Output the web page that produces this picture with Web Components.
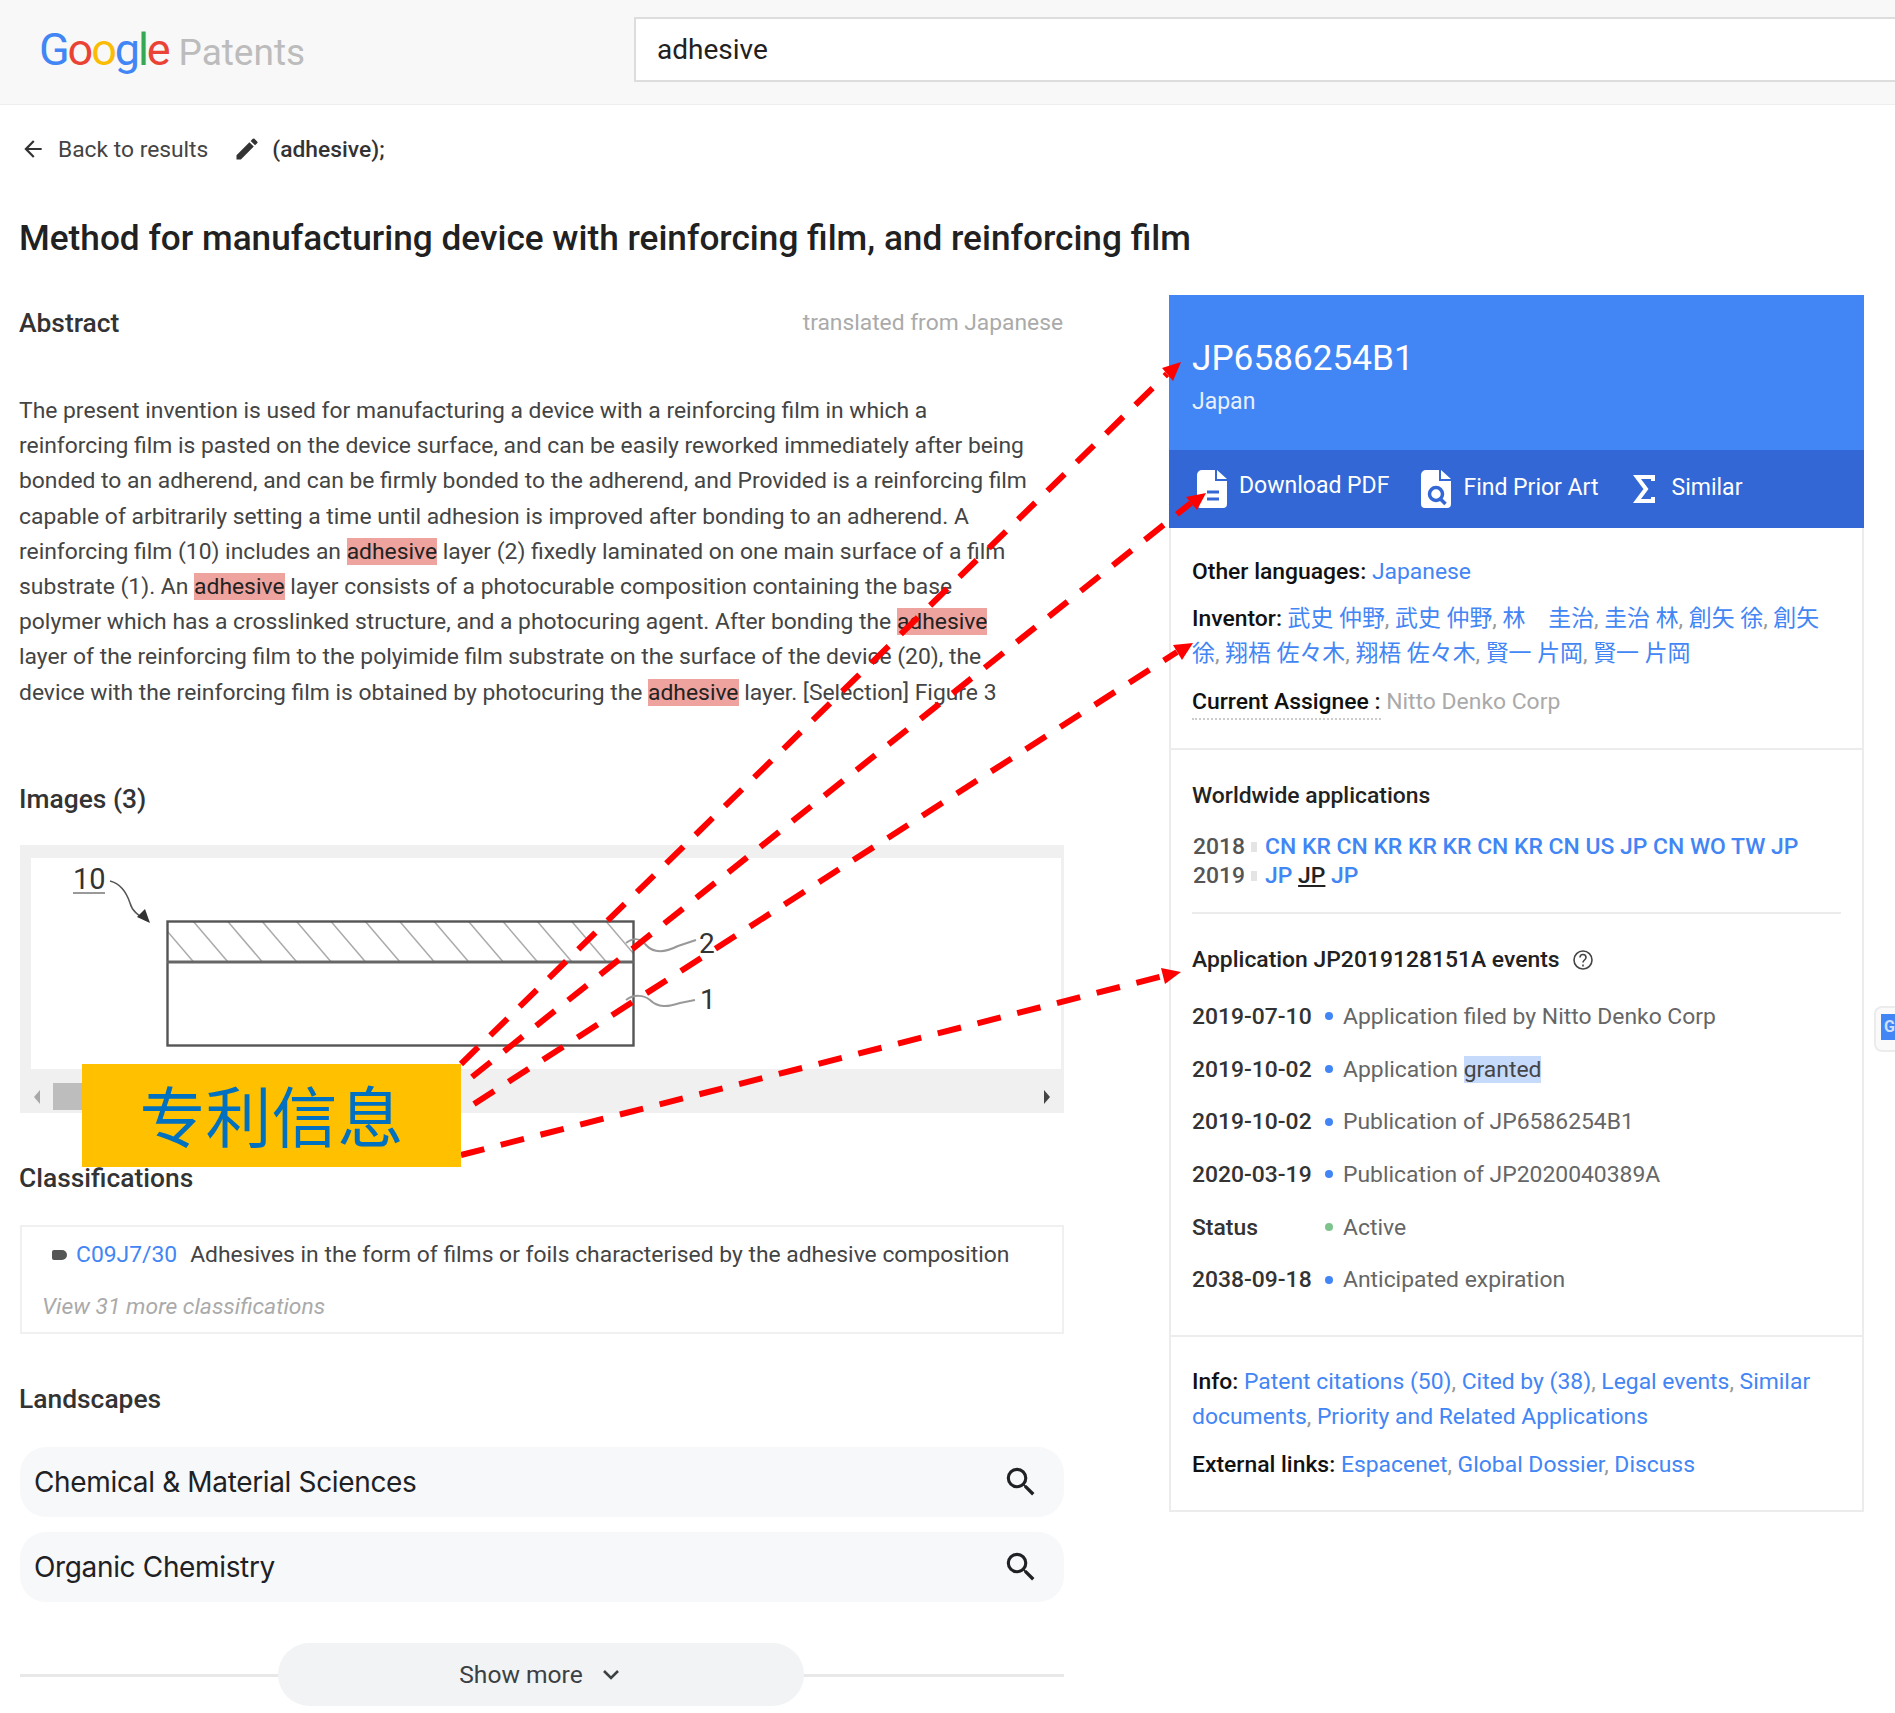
<!DOCTYPE html>
<html>
<head>
<meta charset="utf-8">
<title>Google Patents</title>
<style>
    html, body { margin: 0; padding: 0; background: white; }
    body {
        position: relative;
        width: 1895px;
        height: 1713px;
        overflow: hidden;
        font-family: Roboto, "Noto Sans CJK JP", sans-serif;
        font-size: 23px;
        color: #212121;
    }
</style>
</head>
<body>
<gp-header query="adhesive"></gp-header>
<gp-crumbs query="(adhesive);"></gp-crumbs>
<gp-title>Method for manufacturing device with reinforcing film, and reinforcing film</gp-title>
<gp-main>
    <gp-abstract slot="left" note="translated from Japanese">The present invention is used for manufacturing a device with a reinforcing film in which a<br>reinforcing film is pasted on the device surface, and can be easily reworked immediately after being<br>bonded to an adherend, and can be firmly bonded to the adherend, and Provided is a reinforcing film<br>capable of arbitrarily setting a time until adhesion is improved after bonding to an adherend. A<br>reinforcing film (10) includes an <mark>adhesive</mark> layer (2) fixedly laminated on one main surface of a film<br>substrate (1). An <mark>adhesive</mark> layer consists of a photocurable composition containing the base<br>polymer which has a crosslinked structure, and a photocuring agent. After bonding the <mark>adhesive</mark><br>layer of the reinforcing film to the polyimide film substrate on the surface of the device (20), the<br>device with the reinforcing film is obtained by photocuring the <mark>adhesive</mark> layer. [Selection] Figure 3</gp-abstract>
    <gp-figure slot="left"></gp-figure>
    <gp-classes slot="left" code="C09J7/30" more="View 31 more classifications">Adhesives in the form of films or foils characterised by the adhesive composition</gp-classes>
    <gp-landscapes slot="left">
        <gp-pill>Chemical &amp; Material Sciences</gp-pill>
        <gp-pill>Organic Chemistry</gp-pill>
    </gp-landscapes>
    <gp-show-more slot="left"></gp-show-more>
    <gp-card slot="right"></gp-card>
</gp-main>
<gp-side-tab></gp-side-tab>
<gp-overlay></gp-overlay>

<script>
class GpHeader extends HTMLElement {
    constructor() {
        super();
        this.attachShadow({ mode: 'open' });
        this.shadowRoot.innerHTML = `
            <style>
                :host { display: flex; align-items: flex-start; height: 105px; box-sizing: border-box; background: #f8f8f8; border-bottom: 1px solid #eeeeee; padding: 17px 0 0 39px; }
                #logo { width: 595px; flex: none; display: flex; align-items: baseline; font-family: Roboto, sans-serif; height: 65px; line-height: 65px; }
                #google { font-size: 45px; letter-spacing: -2.1px; }
                #patents { font-size: 37px; color: #bcbcbc; margin-left: 10px; }
                #box { flex: 1; height: 65px; box-sizing: border-box; background: white; border: 2px solid #dddddd; border-right: none; padding-left: 21px; font-size: 28px; line-height: 61px; color: #212121; }
            </style>
            <div id="logo">
                <span id="google"><span style="color:#4285f4">G</span><span style="color:#ea4335">o</span><span style="color:#fbbc05">o</span><span style="color:#4285f4">g</span><span style="color:#34a853">l</span><span style="color:#ea4335">e</span></span>
                <span id="patents">Patents</span>
            </div>
            <div id="box"></div>
        `;
    }
    connectedCallback() {
        this.shadowRoot.getElementById('box').textContent = this.getAttribute('query');
    }
}
customElements.define('gp-header', GpHeader);

class GpCrumbs extends HTMLElement {
    constructor() {
        super();
        this.attachShadow({ mode: 'open' });
        this.shadowRoot.innerHTML = `
            <style>
                :host { display: flex; align-items: center; height: 88px; padding-left: 20px; font-size: 22.8px; color: #444444; }
                svg { flex: none; display: block; }
                #back { margin-left: 12px; }
                #pen { margin-left: 25px; }
                #query { margin-left: 11px; font-weight: 500; color: #333333; }
            </style>
            <svg width="26" height="26" viewBox="0 0 24 24" fill="#333"><path d="M20 11H7.83l5.59-5.59L12 4l-8 8 8 8 1.41-1.41L7.83 13H20v-2z"/></svg>
            <span id="back">Back to results</span>
            <svg id="pen" width="28" height="28" viewBox="0 0 24 24" fill="#333"><path d="M3 17.25V21h3.75L17.81 9.94l-3.75-3.75L3 17.25zM20.71 7.04a1 1 0 0 0 0-1.41l-2.34-2.34a1 1 0 0 0-1.41 0l-1.83 1.83 3.75 3.75 1.83-1.83z"/></svg>
            <span id="query"></span>
        `;
    }
    connectedCallback() {
        this.shadowRoot.getElementById('query').textContent = this.getAttribute('query');
    }
}
customElements.define('gp-crumbs', GpCrumbs);

class GpTitle extends HTMLElement {
    constructor() {
        super();
        this.attachShadow({ mode: 'open' });
        this.shadowRoot.innerHTML = `
            <style>
                :host { display: block; padding: 23px 0 34px 19px; font-size: 35.2px; line-height: 44px; font-weight: 500; color: #212121; white-space: nowrap; }
            </style>
            <slot></slot>
        `;
    }
}
customElements.define('gp-title', GpTitle);

class GpMain extends HTMLElement {
    constructor() {
        super();
        this.attachShadow({ mode: 'open' });
        this.shadowRoot.innerHTML = `
            <style>
                :host { display: grid; grid-template-columns: 1044px 695px; column-gap: 105px; padding-left: 20px; align-items: start; }
                #left { display: flex; flex-direction: column; }
            </style>
            <div id="left"><slot name="left"></slot></div>
            <div id="right"><slot name="right"></slot></div>
        `;
    }
}
customElements.define('gp-main', GpMain);

class GpAbstract extends HTMLElement {
    constructor() {
        super();
        this.attachShadow({ mode: 'open' });
        this.shadowRoot.innerHTML = `
            <style>
                :host { display: block; margin-left: -1px; }
                #head { display: flex; justify-content: space-between; align-items: center; height: 58px; }
                h2 { margin: 0; font-size: 26.4px; font-weight: 500; color: #333333; }
                #note { font-size: 22.8px; color: #aaaaaa; margin: -2px 1px 0 0; }
                #body { margin-top: 41px; font-size: 22.87px; line-height: 35.2px; color: #444444; white-space: nowrap; }
                ::slotted(mark) { background: #efa39e; color: #222222; }
            </style>
            <div id="head"><h2>Abstract</h2><span id="note"></span></div>
            <div id="body"><slot></slot></div>
        `;
    }
    connectedCallback() {
        this.shadowRoot.getElementById('note').textContent = this.getAttribute('note');
    }
}
customElements.define('gp-abstract', GpAbstract);

class GpFigure extends HTMLElement {
    constructor() {
        super();
        this.attachShadow({ mode: 'open' });
        let hatch = '';
        for (let x = 124.2; x < 640; x += 34.4) {
            hatch += `<line x1="${x}" y1="921" x2="${x + 35}" y2="962"/>`;
        }
        this.shadowRoot.innerHTML = `
            <style>
                :host { display: block; margin-top: 69px; }
                h2 { margin: 0 0 0 -1px; height: 40px; line-height: 40px; font-size: 26.4px; font-weight: 500; color: #333333; }
                #frame { margin-top: 26px; height: 268px; background: #f0f0f0; display: flex; flex-direction: column; padding: 13px 3px 0 11px; box-sizing: border-box; }
                #sheet { height: 211px; background: white; flex: none; }
                #sheet svg { display: block; }
                #bar { flex: 1; display: flex; align-items: center; margin: 0 -3px 0 -11px; padding: 12px 14px 0 14px; }
                #thumb { width: 120px; height: 27px; background: #bdbdbd; margin-left: 13px; }
                .tri { width: 0; height: 0; border-top: 7px solid transparent; border-bottom: 7px solid transparent; }
                #l { border-right: 6px solid #a8a8a8; }
                #r { border-left: 6px solid #444444; margin-left: auto; }
            </style>
            <h2>Images (3)</h2>
            <div id="frame">
                <div id="sheet">
                    <svg width="1030" height="211" viewBox="31 858 1030 211" fill="none" stroke="#555">
                        <defs><clipPath id="layer"><rect x="167" y="921" width="467" height="41"/></clipPath></defs>
                        <text x="73" y="889" font-family="Roboto, sans-serif" font-size="29" fill="#333" stroke="none">10</text>
                        <line x1="73" y1="893" x2="105" y2="893" stroke="#999" stroke-width="2"/>
                        <path d="M110 881c12 3 17 13 20 22 2 8 8 12 16 17" stroke="#555" stroke-width="1.5"/>
                        <polygon points="150,923 137,917 145,909" fill="#333" stroke="none"/>
                        <g clip-path="url(#layer)" stroke="#aaa" stroke-width="1.5">${hatch}</g>
                        <rect x="167.5" y="921.5" width="466" height="124" stroke="#555" stroke-width="2.4"/>
                        <line x1="167" y1="962" x2="634" y2="962" stroke="#666" stroke-width="3"/>
                        <path d="M626 943c8-6 14-5 20 2 8 9 20 7 32 1l18-6" stroke="#999" stroke-width="2"/>
                        <path d="M626 1000c8-6 18-5 24 0 8 8 18 7 30 3l15-3" stroke="#999" stroke-width="2"/>
                        <text x="699" y="953" font-family="Roboto, sans-serif" font-size="28" fill="#333" stroke="none">2</text>
                        <text x="700" y="1009" font-family="Roboto, sans-serif" font-size="28" fill="#333" stroke="none">1</text>
                    </svg>
                </div>
                <div id="bar">
                    <div class="tri" id="l"></div>
                    <div id="thumb"></div>
                    <div class="tri" id="r"></div>
                </div>
            </div>
        `;
    }
}
customElements.define('gp-figure', GpFigure);

class GpClasses extends HTMLElement {
    constructor() {
        super();
        this.attachShadow({ mode: 'open' });
        this.shadowRoot.innerHTML = `
            <style>
                :host { display: block; margin-top: 45px; }
                h2 { margin: 0 0 0 -1px; height: 40px; line-height: 40px; font-size: 26.4px; font-weight: 500; color: #333333; }
                #box { margin-top: 27px; height: 109px; box-sizing: border-box; border: 2px solid #f0f0f0; padding: 11px 0 0 30px; font-size: 22.87px; color: #444444; white-space: nowrap; }
                #row { display: flex; align-items: center; height: 34px; }
                #bullet { width: 15px; height: 10px; background: #555555; border-radius: 2px 5px 5px 2px; margin-right: 9px; }
                #code { color: #4285f4; margin-right: 13px; }
                #more { margin: 21px 0 0 -10px; font-style: italic; color: #aaaaaa; }
            </style>
            <h2>Classifications</h2>
            <div id="box">
                <div id="row"><span id="bullet"></span><span id="code"></span><slot></slot></div>
                <div id="more"></div>
            </div>
        `;
    }
    connectedCallback() {
        this.shadowRoot.getElementById('code').textContent = this.getAttribute('code');
        this.shadowRoot.getElementById('more').textContent = this.getAttribute('more');
    }
}
customElements.define('gp-classes', GpClasses);

class GpLandscapes extends HTMLElement {
    constructor() {
        super();
        this.attachShadow({ mode: 'open' });
        this.shadowRoot.innerHTML = `
            <style>
                :host { display: block; margin-top: 45px; }
                h2 { margin: 0 0 28px -1px; height: 40px; line-height: 40px; font-size: 26.4px; font-weight: 500; color: #333333; }
                #rows { display: flex; flex-direction: column; gap: 15px; }
            </style>
            <h2>Landscapes</h2>
            <div id="rows"><slot></slot></div>
        `;
    }
}
customElements.define('gp-landscapes', GpLandscapes);

class GpPill extends HTMLElement {
    constructor() {
        super();
        this.attachShadow({ mode: 'open' });
        this.shadowRoot.innerHTML = `
            <style>
                :host { display: flex; align-items: center; justify-content: space-between; height: 70px; padding: 0 24px 0 14px; background: #f7f8f9; border-radius: 26px; font-family: Inter, sans-serif; font-size: 28px; letter-spacing: -0.35px; color: #202124; }
                svg { display: block; }
            </style>
            <span><slot></slot></span>
            <svg width="38" height="38" viewBox="0 0 24 24" fill="#202124"><path d="M15.5 14h-.79l-.28-.27A6.47 6.47 0 0 0 16 9.5 6.5 6.5 0 1 0 9.5 16c1.61 0 3.09-.59 4.23-1.57l.27.28v.79l5 4.99L20.49 19l-4.99-5zm-6 0C7.01 14 5 11.99 5 9.5S7.01 5 9.5 5 14 7.01 14 9.5 11.99 14 9.5 14z"/></svg>
        `;
    }
}
customElements.define('gp-pill', GpPill);

class GpShowMore extends HTMLElement {
    constructor() {
        super();
        this.attachShadow({ mode: 'open' });
        this.shadowRoot.innerHTML = `
            <style>
                :host { display: flex; justify-content: center; align-items: center; height: 63px; margin-top: 41px; background: linear-gradient(#e8e8e8, #e8e8e8) 0 31px / 100% 3px no-repeat; }
                #btn { display: flex; align-items: center; justify-content: center; gap: 16px; width: 526px; height: 63px; margin-left: -2px; background: #f1f3f4; border-radius: 32px; font-size: 24.6px; color: #3c4043; }
                svg { display: block; }
            </style>
            <div id="btn">
                <span>Show more</span>
                <svg width="24" height="24" viewBox="0 0 24 24" fill="none" stroke="#3c4043" stroke-width="2.6"><path d="M5 9l7 7 7-7"/></svg>
            </div>
        `;
    }
}
customElements.define('gp-show-more', GpShowMore);

class GpEvent extends HTMLElement {
    constructor() {
        super();
        this.attachShadow({ mode: 'open' });
        this.shadowRoot.innerHTML = `
            <style>
                :host { display: grid; grid-template-columns: 133px 18px 1fr; align-items: center; height: 52.7px; color: #666666; }
                #date { font-weight: 500; color: #333333; }
                #dot { width: 8px; height: 8px; border-radius: 50%; background: var(--dot, #4285f4); }
                ::slotted(mark) { background: #c6dafc; color: #444444; }
            </style>
            <span id="date"></span><span id="dot"></span><span><slot></slot></span>
        `;
    }
    connectedCallback() {
        this.shadowRoot.getElementById('date').textContent = this.getAttribute('date');
    }
}
customElements.define('gp-event', GpEvent);

class GpCard extends HTMLElement {
    constructor() {
        super();
        this.attachShadow({ mode: 'open' });
        const names = (list) => list.map(n => `<a>${n}</a>`).join('<span class="c">, </span>');
        const codes = (list) => list.map(n => `<a>${n}</a>`).join(' ');
        this.shadowRoot.innerHTML = `
            <style>
                :host { display: block; margin-top: 1px; height: 1217px; box-sizing: border-box; border: 2px solid #ececec; border-top: none; font-size: 22.9px; color: #111111; }
                a { color: #4285f4; }
                b { font-weight: 500; }
                .c { color: #999999; }
                #top { margin: 0 -2px; background: #4285f4; color: white; height: 155px; box-sizing: border-box; padding: 39px 0 0 23px; }
                #num { font-size: 35.2px; line-height: 48px; }
                #country { font-size: 23px; line-height: 34px; margin-top: 3px; color: #e8f0fe; }
                #acts { margin: 0 -2px; background: #3367d6; height: 78px; display: flex; align-items: center; padding-left: 28px; color: white; font-size: 23px; }
                #acts svg { display: block; flex: none; }
                #acts span { margin-left: 12px; position: relative; top: -2px; }
                #acts #dlt { top: -4px; }
                #acts #sim { margin-left: 17px; }
                .a2 { margin-left: 32px; }
                .a3 { margin-left: 34px; }
                .sec { padding: 0 21px; border-bottom: 2px solid #ececec; }
                #meta { height: 222px; box-sizing: border-box; padding-top: 26px; }
                .line { line-height: 35px; }
                #lang { height: 35px; }
                #inv { margin-top: 12px; }
                #asg { margin-top: 13px; height: 35px; }
                #asg b { border-bottom: 2px dotted #cccccc; padding-bottom: 3px; }
                #asg .n { color: #aaaaaa; }
                #world { height: 587px; box-sizing: border-box; padding-top: 28px; }
                h3 { margin: 0; font-size: 22.9px; font-weight: 500; color: #222222; line-height: 36px; }
                #years { margin-top: 19px; line-height: 28.5px; color: #555555; padding-left: 1px; font-weight: 500; }
                .yr { display: flex; align-items: center; }
                .yr i { width: 6px; height: 10px; background: #e4e4e4; margin: 0 8px 0 6px; flex: none; }
                #rule { margin-top: 22px; height: 2px; background: #ececec; }
                #evhead { display: flex; align-items: center; gap: 12px; margin-top: 28px; }
                #events { display: block; margin-top: 12px; }
                #foot { padding: 27px 21px 0; }
                #ext { margin-top: 13px; line-height: 35px; }
            </style>
            <div id="top">
                <div id="num">JP6586254B1</div>
                <div id="country">Japan</div>
            </div>
            <div id="acts">
                <svg width="30" height="38" viewBox="0 0 30 38"><path fill="white" d="M5 0h13v11h12v23a4 4 0 0 1-4 4H4a4 4 0 0 1-4-4V5a5 5 0 0 1 5-5zM20 0l10 9H20z"/><path d="M10 22h12M10 29h12" stroke="#3367d6" stroke-width="3"/></svg>
                <span id="dlt">Download PDF</span>
                <svg class="a2" width="30" height="38" viewBox="0 0 30 38"><path fill="white" d="M5 0h13v11h12v23a4 4 0 0 1-4 4H4a4 4 0 0 1-4-4V5a5 5 0 0 1 5-5zM20 0l10 9H20z"/><circle cx="15" cy="24" r="6.5" fill="none" stroke="#3367d6" stroke-width="3.5"/><path d="M19.5 29l5 5" stroke="#3367d6" stroke-width="3.5"/></svg>
                <span>Find Prior Art</span>
                <svg class="a3" width="22" height="30" viewBox="0 0 22 30"><path d="M20 7V3H4l9 12-9 12h16v-4" fill="none" stroke="white" stroke-width="4"/></svg>
                <span id="sim">Similar</span>
            </div>
            <div class="sec" id="meta">
                <div class="line" id="lang"><b>Other languages:</b> <a>Japanese</a></div>
                <div class="line" id="inv"><b>Inventor:</b> ${names(['武史 仲野', '武史 仲野', '林　圭治', '圭治 林', '創矢 徐'])}<span class="c">, </span><a>創矢</a><br><a>徐</a><span class="c">, </span>${names(['翔梧 佐々木', '翔梧 佐々木', '賢一 片岡', '賢一 片岡'])}</div>
                <div class="line" id="asg"><b>Current Assignee :</b> <span class="n">Nitto Denko Corp</span></div>
            </div>
            <div class="sec" id="world">
                <h3>Worldwide applications</h3>
                <div id="years">
                    <div class="yr">2018<i></i><span>${codes(['CN', 'KR', 'CN', 'KR', 'KR', 'KR', 'CN', 'KR', 'CN', 'US', 'JP', 'CN', 'WO', 'TW', 'JP'])}</span></div>
                    <div class="yr">2019<i></i><span><a>JP</a> <u style="color:#222">JP</u> <a>JP</a></span></div>
                </div>
                <div id="rule"></div>
                <div id="evhead">
                    <h3>Application JP2019128151A events</h3>
                    <svg width="22" height="22" viewBox="0 0 22 22" fill="none" stroke="#444" stroke-width="1.6"><circle cx="11" cy="11" r="9"/><path d="M8 8.5c0-4 6-4 6 0 0 2.5-3 2.5-3 5"/><path d="M11 15.5v2"/></svg>
                </div>
                <div id="events">
                    <gp-event date="2019-07-10">Application filed by Nitto Denko Corp</gp-event>
                    <gp-event date="2019-10-02">Application <mark>granted</mark></gp-event>
                    <gp-event date="2019-10-02">Publication of JP6586254B1</gp-event>
                    <gp-event date="2020-03-19">Publication of JP2020040389A</gp-event>
                    <gp-event date="Status" style="--dot:#7cc48b">Active</gp-event>
                    <gp-event date="2038-09-18">Anticipated expiration</gp-event>
                </div>
            </div>
            <div id="foot">
                <div class="line"><b>Info:</b> ${names(['Patent citations (50)', 'Cited by (38)', 'Legal events'])}<span class="c">, </span><a>Similar</a><br><a>documents</a><span class="c">, </span><a>Priority and Related Applications</a></div>
                <div id="ext"><b>External links:</b> ${names(['Espacenet', 'Global Dossier', 'Discuss'])}</div>
            </div>
        `;
    }
}
customElements.define('gp-card', GpCard);

// floating tab on the right edge
class GpSideTab extends HTMLElement {
    constructor() {
        super();
        this.attachShadow({ mode: 'open' });
        this.shadowRoot.innerHTML = `
            <style>
                :host { position: absolute; left: 1874px; top: 1006px; width: 21px; height: 46px; box-sizing: border-box; background: #fafafa; border: 2px solid #ececec; border-right: none; border-radius: 8px 0 0 8px; padding: 6px 0 0 5px; overflow: hidden; }
                div { height: 26px; background: #4285f4; color: #cfe0fc; font: bold 16px/26px Roboto, sans-serif; padding-left: 3px; }
            </style>
            <div>G</div>
        `;
    }
}
customElements.define('gp-side-tab', GpSideTab);

// red annotation arrows and the yellow label drawn over the page
class GpOverlay extends HTMLElement {
    constructor() {
        super();
        this.attachShadow({ mode: 'open' });
        this.shadowRoot.innerHTML = `
            <style>
                :host { position: absolute; left: 0; top: 0; width: 1895px; height: 1713px; pointer-events: none; }
                svg { position: absolute; left: 0; top: 0; }
                #tag { position: absolute; left: 82px; top: 1064px; width: 379px; height: 103px; background: #ffc000; color: #0070c0; font-family: "Noto Sans CJK SC", sans-serif; font-size: 66px; line-height: 99px; text-align: center; }
            </style>
            <svg width="1895" height="1713" fill="#ff0000">
                <g stroke="#ff0000" stroke-width="6" stroke-dasharray="24 17" fill="none">
                    <line x1="461" y1="1064" x2="1167" y2="374"/>
                    <line x1="472" y1="1077" x2="1191" y2="503"/>
                    <line x1="474" y1="1104" x2="1177" y2="652"/>
                    <line x1="461" y1="1155" x2="1163" y2="976"/>
                </g>
                <polygon points="1181,362 1162,368 1173,381"/>
                <polygon points="1206,493 1186,497 1197,510"/>
                <polygon points="1193,643 1173,645 1182,660"/>
                <polygon points="1181,972 1161,968 1165,984"/>
            </svg>
            <div id="tag">专利信息</div>
        `;
    }
}
customElements.define('gp-overlay', GpOverlay);
</script>
</body>
</html>
